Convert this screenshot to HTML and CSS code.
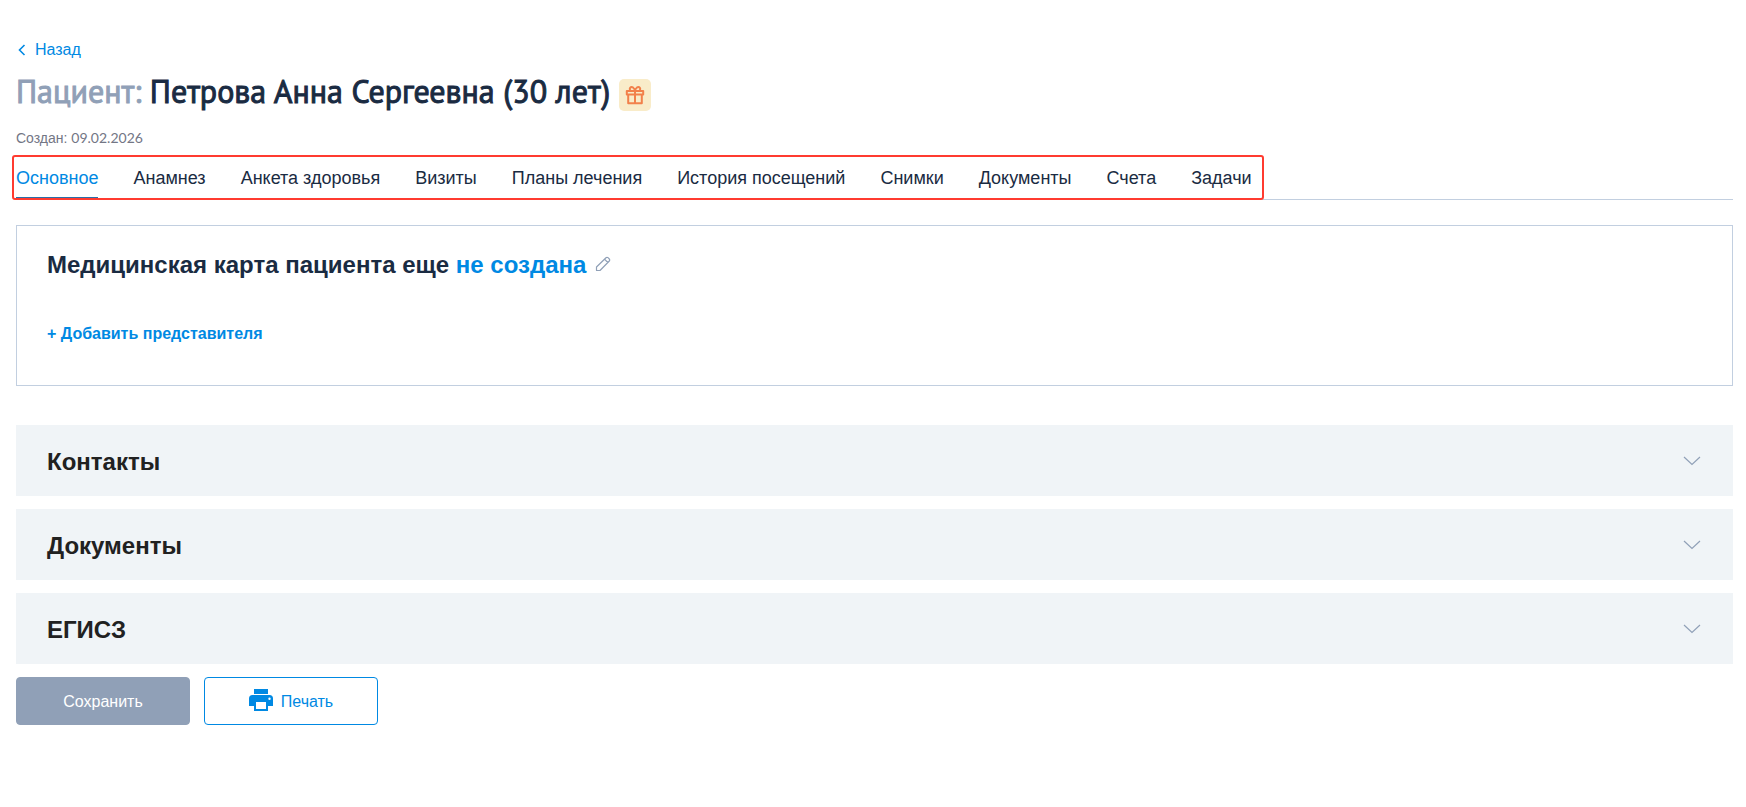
FILE: index.html
```html
<!DOCTYPE html>
<html lang="ru">

<head>
    <meta charset="UTF-8">
    <meta name="viewport" content="width=device-width, initial-scale=1.0">
    <title>Карта пациента</title>
    <link rel="stylesheet" href="styles.css">
</head>

<body>
    <main class="page">
        <a class="back" href="#">
            <svg width="8" height="12" viewBox="0 0 8 12" fill="none" stroke="currentColor" stroke-width="1.6">
                <path d="M6.5 1L1.5 6l5 5" />
            </svg>
            Назад
        </a>

        <header class="title-row">
            <h1><span class="muted">Пациент:</span> Петрова Анна Сергеевна (30 лет)</h1>
            <span class="gift">
                <svg width="20" height="20" viewBox="0 0 20 20" fill="none" stroke="currentColor" stroke-width="2" stroke-linejoin="round">
                    <path d="M1.8 6h16.4v3.5H1.8zM3.2 9.5h13.600v8.800H3.2zM10 6v12" />
                    <path d="M10 6H6.500a2 2 0 1 1 2-3C9.500 3.700 10 6 10 6zM10 6h3.500a2 2 0 1 0-2-3C10.500 3.700 10 6 10 6z" />
                </svg>
            </span>
        </header>

        <p class="created">Создан: <span class="date">09.02.2026</span></p>

        <nav class="tabs">
            <div class="tab-list">
                <a class="tab active" href="#">Основное</a>
                <a class="tab" href="#">Анамнез</a>
                <a class="tab" href="#">Анкета здоровья</a>
                <a class="tab" href="#">Визиты</a>
                <a class="tab" href="#">Планы лечения</a>
                <a class="tab" href="#">История посещений</a>
                <a class="tab" href="#">Снимки</a>
                <a class="tab" href="#">Документы</a>
                <a class="tab" href="#">Счета</a>
                <a class="tab" href="#">Задачи</a>
            </div>
        </nav>

        <section class="card">
            <div class="card-title">
                <h2>Медицинская карта пациента еще <a href="#">не создана</a></h2>
                <button type="button" class="edit" aria-label="Редактировать">
                    <svg width="16" height="16" viewBox="0 0 16 16" fill="none" stroke="currentColor" stroke-width="1.2" stroke-linejoin="round">
                        <path d="M1.5 14.500v-3.500L11 1.700a1.400 1.400 0 0 1 2 0l1.300 1.300a1.400 1.400 0 0 1 0 2L5 14.500zM9.500 3.200l3.300 3.300" />
                    </svg>
                </button>
            </div>
            <button type="button" class="add">+ Добавить представителя</button>
        </section>

        <div class="sections">
            <button type="button" class="section">
                <span>Контакты</span>
                <svg width="18" height="10" viewBox="0 0 18 10" fill="none" stroke="currentColor" stroke-width="1.2">
                    <path d="M1 1l8 7.500L17 1" />
                </svg>
            </button>
            <button type="button" class="section">
                <span>Документы</span>
                <svg width="18" height="10" viewBox="0 0 18 10" fill="none" stroke="currentColor" stroke-width="1.2">
                    <path d="M1 1l8 7.500L17 1" />
                </svg>
            </button>
            <button type="button" class="section">
                <span>ЕГИСЗ</span>
                <svg width="18" height="10" viewBox="0 0 18 10" fill="none" stroke="currentColor" stroke-width="1.2">
                    <path d="M1 1l8 7.500L17 1" />
                </svg>
            </button>
        </div>

        <div class="actions">
            <button type="button" class="btn btn-save"><span>Сохранить</span></button>
            <button type="button" class="btn btn-print">
                <svg width="24" height="24" viewBox="0 0 24 24" fill="currentColor">
                    <path d="M5 0h14v5H5zM3.500 6h17A3.500 3.500 0 0 1 24 9.500V17h-5v5H5v-5H0V9.500A3.500 3.500 0 0 1 3.500 6zM7 13v7h10v-7zM20.500 8.500a1.200 1.200 0 1 0 0 2.400 1.200 1.200 0 0 0 0-2.400z" fill-rule="evenodd" />
                </svg>
                <span>Печать</span>
            </button>
        </div>
    </main>
</body>

</html>
```
FILE: styles.css
```css
* {
    box-sizing: border-box;
}

body {
    margin: 0;
    font-family: "Liberation Sans", Arial, sans-serif;
    font-size: 16px;
    color: #1a2b42;
    background: #fff;
}

h1,
h2,
p {
    margin: 0;
}

a {
    color: #0089e3;
    text-decoration: none;
}

button {
    font-family: inherit;
    cursor: pointer;
}

.page {
    padding: 40px 13px 40px 16px;
}

.back {
    display: flex;
    align-items: center;
    gap: 9px;
    width: max-content;
    padding-left: 2px;
    line-height: 19px;
}

.title-row {
    display: flex;
    align-items: flex-end;
    gap: 9px;
    margin-top: 10px;
}

h1 {
    font-family: "PT Sans", "Noto Sans", sans-serif;
    font-size: 32px;
    font-weight: 500;
    line-height: 44px;
    -webkit-text-stroke: 1px;
}

.muted {
    color: #90a0b7;
}

.gift {
    display: flex;
    align-items: center;
    justify-content: center;
    width: 32px;
    height: 32px;
    margin-bottom: 2px;
    border-radius: 5px;
    background: #f9ecc9;
    color: #f2814b;
}

.created {
    margin-top: 15px;
    font-size: 14px;
    line-height: 20px;
    color: #737685;
}

.date {
    font-family: Lato, sans-serif;
}

.tabs {
    margin-top: 7px;
    border-bottom: 1px solid #c2cfe0;
}

.tab-list {
    display: flex;
    gap: 35px;
    position: relative;
    width: max-content;
}

/* red frame around the tabs */
.tab-list::after {
    content: "";
    position: absolute;
    inset: 0 -12px -1px -4px;
    border: 2px solid #ff3b30;
    border-radius: 3px;
    pointer-events: none;
}

.tab {
    padding: 13px 0 9px;
    border-bottom: 2px solid transparent;
    font-size: 18px;
    line-height: 20px;
    color: #1a2b42;
}

.tab.active {
    color: #0089e3;
    border-color: #2a6fa8;
}

.card {
    margin-top: 25px;
    padding: 24px 30px 41px;
    border: 1px solid #c2cfe0;
}

.card-title {
    display: flex;
    align-items: center;
    gap: 9px;
}

h2 {
    font-size: 24px;
    line-height: 30px;
}

.edit {
    display: flex;
    padding: 0 0 2px;
    border: none;
    background: none;
    color: #90a0b7;
}

.add {
    display: block;
    margin-top: 44px;
    padding: 0;
    border: none;
    background: none;
    font-size: 16px;
    font-weight: bold;
    line-height: 20px;
    color: #0089e3;
}

.sections {
    display: grid;
    gap: 13px;
    margin-top: 39px;
}

.section {
    display: flex;
    align-items: center;
    justify-content: space-between;
    padding: 20px 32px 19px 31px;
    border: none;
    background: #f0f4f7;
    font-size: 24px;
    font-weight: bold;
    line-height: 30px;
    color: #212121;
}

.section span,
.btn span {
    padding-top: 2px;
}

.section svg {
    color: #90a0b7;
}

.actions {
    display: flex;
    gap: 14px;
    margin-top: 13px;
}

.btn {
    display: flex;
    align-items: center;
    justify-content: center;
    gap: 8px;
    width: 174px;
    height: 48px;
    border: 1px solid #0089e3;
    border-radius: 4px;
    background: #fff;
    font-size: 16px;
    color: #0089e3;
}

.btn-save {
    border-color: #90a0b7;
    background: #90a0b7;
    color: #fff;
}
```
